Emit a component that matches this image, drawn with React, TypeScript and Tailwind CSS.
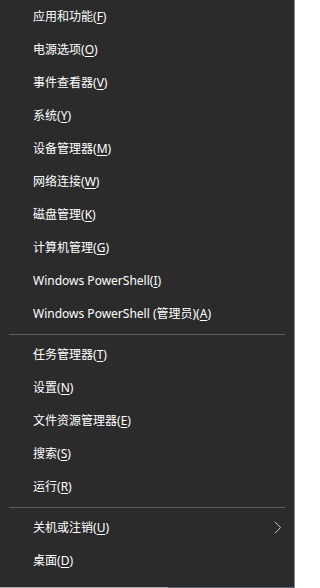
const groups: { label: string; key: string; sub?: boolean }[][] = [
  [
    { label: '应用和功能', key: 'F' },
    { label: '电源选项', key: 'O' },
    { label: '事件查看器', key: 'V' },
    { label: '系统', key: 'Y' },
    { label: '设备管理器', key: 'M' },
    { label: '网络连接', key: 'W' },
    { label: '磁盘管理', key: 'K' },
    { label: '计算机管理', key: 'G' },
    { label: 'Windows PowerShell', key: 'I' },
    { label: 'Windows PowerShell (管理员)', key: 'A' },
  ],
  [
    { label: '任务管理器', key: 'T' },
    { label: '设置', key: 'N' },
    { label: '文件资源管理器', key: 'E' },
    { label: '搜索', key: 'S' },
    { label: '运行', key: 'R' },
  ],
  [
    { label: '关机或注销', key: 'U', sub: true },
    { label: '桌面', key: 'D' },
  ],
];

function Item({ label, keyName, sub }: { label: string; keyName: string; sub?: boolean }) {
  return (
    <div className="flex h-[33px] items-center pl-[33px] pr-[11px] text-[12px] text-white">
      <span className="flex-1 whitespace-nowrap">
        {label}(<span className="underline underline-offset-2">{keyName}</span>)
      </span>
      {sub && (
        <svg width="8" height="13" viewBox="0 0 8 13" className="mr-[1px]">
          <path d="M1 0.8 L6.6 6.5 L1 12.2" fill="none" stroke="#d0d0d0" strokeWidth="1" />
        </svg>
      )}
    </div>
  );
}

export default function App() {
  return (
    <div
      className="flex h-[588px] w-[295px] flex-col bg-[#2b2b2b]"
      style={{ fontFamily: '"Segoe UI", "Noto Sans", "Noto Sans CJK SC", sans-serif' }}
    >
      <div className="flex flex-1 flex-col border-r border-[#8c8c8c]">
        {groups.map((group, i) => (
          <div key={i}>
            {i > 0 && (
              <div className="flex h-[8px] items-center px-[9px]">
                <div className="h-px flex-1 bg-[#5c5c5c]" />
              </div>
            )}
            {group.map((item) => (
              <Item key={item.key} label={item.label} keyName={item.key} sub={item.sub} />
            ))}
          </div>
        ))}
      </div>
      <div className="flex h-px">
        <div className="w-[168px] bg-[#a9a9a9]" />
        <div className="flex-1 bg-[#5e6b78]" />
      </div>
    </div>
  );
}
